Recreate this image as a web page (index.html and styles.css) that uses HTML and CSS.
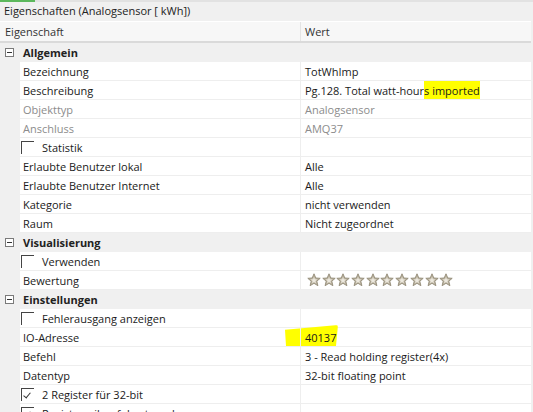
FILE: index.html
```html
<!DOCTYPE html>
<html lang="de">
<head>
  <meta charset="UTF-8" />
  <title>Eigenschaften</title>
  <link rel="stylesheet" href="styles.css">
</head>
<body>
  <div class="accent"></div>
  <div class="title">Eigenschaften (Analogsensor [ kWh])</div>

  <div class="grid">
    <div class="head">
      <div class="hcell">Eigenschaft</div>
      <div class="hcell val">Wert</div>
    </div>

    <!-- Allgemein -->
    <div class="cat"><span class="toggle"></span><b>Allgemein</b></div>
    <div class="row"><div class="name">Bezeichnung</div><div class="value">TotWhImp</div></div>
    <div class="row"><div class="name">Beschreibung</div><div class="value">Pg.128. Total watt-hour<span class="mark">s imported</span></div></div>
    <div class="row ro"><div class="name">Objekttyp</div><div class="value">Analogsensor</div></div>
    <div class="row ro"><div class="name">Anschluss</div><div class="value">AMQ37</div></div>
    <div class="row"><div class="name"><span class="check"></span>Statistik</div><div class="value"></div></div>
    <div class="row"><div class="name">Erlaubte Benutzer lokal</div><div class="value">Alle</div></div>
    <div class="row"><div class="name">Erlaubte Benutzer Internet</div><div class="value">Alle</div></div>
    <div class="row"><div class="name">Kategorie</div><div class="value">nicht verwenden</div></div>
    <div class="row"><div class="name">Raum</div><div class="value">Nicht zugeordnet</div></div>

    <!-- Visualisierung -->
    <div class="cat"><span class="toggle"></span><b>Visualisierung</b></div>
    <div class="row"><div class="name"><span class="check"></span>Verwenden</div><div class="value"></div></div>
    <div class="row"><div class="name">Bewertung</div><div class="value stars" id="stars"></div></div>

    <!-- Einstellungen -->
    <div class="cat"><span class="toggle"></span><b>Einstellungen</b></div>
    <div class="row"><div class="name"><span class="check"></span>Fehlerausgang anzeigen</div><div class="value"></div></div>
    <div class="row marked"><div class="name">IO-Adresse</div><div class="value">40137</div><div class="blob"></div></div>
    <div class="row"><div class="name">Befehl</div><div class="value">3 - Read holding register(4x)</div></div>
    <div class="row"><div class="name">Datentyp</div><div class="value">32-bit floating point</div></div>
    <div class="row"><div class="name"><span class="check on"></span>2 Register für 32-bit</div><div class="value"></div></div>
    <div class="row"><div class="name"><span class="check on"></span>Registerreihenfolge tauschen</div><div class="value"></div></div>
  </div>

  <script>
    // ten rating stars
    const star = '<svg width="14" height="14" viewBox="0 0 14 14"><path d="M7 0.8 L8.8 5 L13.2 5.3 L9.8 8.2 L10.9 12.7 L7 10.3 L3.1 12.7 L4.2 8.2 L0.8 5.3 L5.2 5 Z" fill="#bdb5a2" stroke="#928a76" stroke-width="0.9"/><path d="M7 4 L7.9 6.3 L10.2 6.5 L8.4 8 L9 10.2 L7 9 L5 10.2 L5.6 8 L3.8 6.5 L6.1 6.3 Z" fill="#ece8de"/></svg>';
    document.getElementById('stars').innerHTML = star.repeat(10);
  </script>
</body>
</html>
```

FILE: styles.css
```css
* { box-sizing: border-box; margin: 0; padding: 0; }
body {
  width: 533px;
  height: 412px;
  overflow: hidden;
  background: #f0f0f0;
  font-family: 'Open Sans', 'Noto Sans', sans-serif;
  font-size: 11px;
  color: #1a1a1a;
}

/* TOP ACCENT + TITLE */
.accent {
  height: 2px;
  background: linear-gradient(to right, #5cb85c 0, #5cb85c 35px, #e2e2e2 35px);
}
.title {
  height: 19px;
  line-height: 18px;
  padding-left: 4px;
  background: #f0f0f0;
  color: #222;
}

/* GRID */
.grid { width: 531px; }
.head {
  display: grid;
  grid-template-columns: 300px 1fr;
  height: 22px;
  background: #f7f7f7;
  border-top: 1px solid #fff;
  border-bottom: 2px solid #dadada;
}
.hcell {
  padding-left: 5px;
  line-height: 19px;
  color: #333;
}
.hcell.val { border-left: 1px solid #e4e4e4; padding-left: 4px; }

.cat {
  display: flex;
  align-items: center;
  height: 19px;
  background: #f0f0f0;
}
.cat b { padding-left: 9px; font-weight: 700; color: #222; }
.toggle {
  position: relative;
  width: 9px;
  height: 9px;
  margin-left: 5px;
  border: 1px solid #7a7a7a;
  background: #fff;
}
.toggle::after {
  content: '';
  position: absolute;
  left: 1px; top: 3px;
  width: 5px; height: 1px;
  background: #333;
}

.row {
  position: relative;
  display: grid;
  grid-template-columns: 20px 280px 1fr;
  height: 19px;
}
.row::before { content: ''; background: #f0f0f0; }
.name, .value {
  display: flex;
  align-items: center;
  background: #fff;
  border-bottom: 1px solid #eeeeee;
  white-space: nowrap;
  overflow: hidden;
}
.name { padding-left: 3px; }
.value { padding-left: 4px; border-left: 1px solid #eeeeee; }
.row.ro .name, .row.ro .value { color: #8c8c8c; }

.check {
  position: relative;
  width: 13px;
  height: 13px;
  margin: 1px 8px 0 -2px;
  border-top: 1px solid #444;
  border-left: 1px solid #444;
  flex: none;
}
.check.on::after {
  content: '';
  position: absolute;
  left: 3px; top: 2px;
  width: 3px; height: 6px;
  border-right: 1px solid #333;
  border-bottom: 1px solid #333;
  transform: rotate(40deg);
}

.stars { gap: 0.7px; padding-left: 6px; }
.stars svg { flex: none; }

/* highlighter marks */
.mark { background: #ffff00; padding: 4px 0 3px; }
.marked .value { position: relative; z-index: 1; background: transparent; }
.marked .name { position: relative; z-index: 1; background: transparent; }
.row.marked { background: #fff; }
.row.marked::before { background: #f0f0f0; }
.blob {
  position: absolute;
  left: 285px;
  top: -3px;
  width: 53px;
  height: 22px;
  background: #ffff00;
  clip-path: polygon(0 22%, 100% 0, 96% 100%, 2% 100%);
  border-radius: 2px;
}
```
